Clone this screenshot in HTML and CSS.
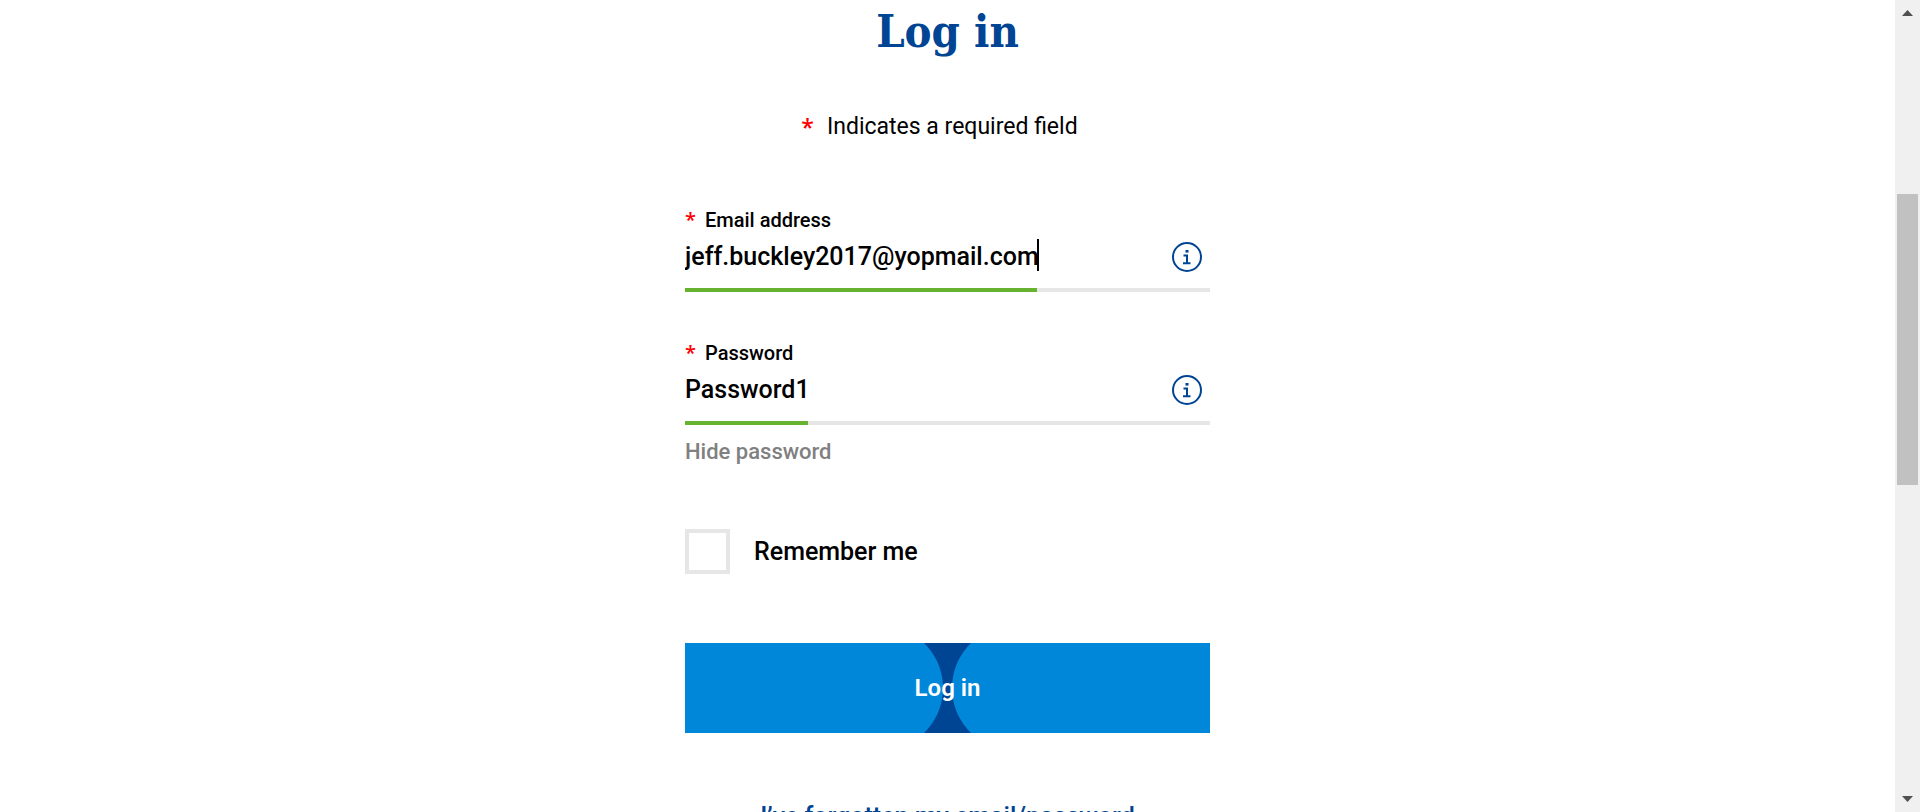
FILE: index.html
```html
<!DOCTYPE html>
<html lang="en">
<head>
<meta charset="utf-8">
<meta name="viewport" content="width=device-width, initial-scale=1">
<title>Log in</title>
<link rel="stylesheet" href="styles.css">
</head>
<body>
<div class="viewport">
  <main class="page">
    <h1 class="title">Log in</h1>
    <p class="required-note"><span class="star">*</span>Indicates a required field</p>
    <form class="form">
      <div class="field">
        <label class="label" for="email"><span class="star">*</span>Email address</label>
        <div class="control">
          <input class="input" id="email" type="text" value="jeff.buckley2017@yopmail.com">
          <button class="info" type="button" aria-label="About the email address">
            <svg viewBox="0 0 30 30" width="30" height="30" aria-hidden="true"><circle cx="15" cy="15" r="14"/><path d="M11.500 13.500H15V21.300M11 21.300H18.500"/><rect x="13.500" y="8" width="3" height="2.600"/></svg>
          </button>
          <span class="caret" style="left: 67%"></span>
        </div>
        <div class="line"><span class="line-fill" style="width: 67%"></span></div>
      </div>
      <div class="field">
        <label class="label" for="password"><span class="star">*</span>Password</label>
        <div class="control">
          <input class="input" id="password" type="text" value="Password1">
          <button class="info" type="button" aria-label="About the password">
            <svg viewBox="0 0 30 30" width="30" height="30" aria-hidden="true"><circle cx="15" cy="15" r="14"/><path d="M11.500 13.500H15V21.300M11 21.300H18.500"/><rect x="13.500" y="8" width="3" height="2.600"/></svg>
          </button>
        </div>
        <div class="line"><span class="line-fill" style="width: 23.4%"></span></div>
      </div>
      <button class="toggle" type="button">Hide password</button>
      <div class="remember">
        <input class="checkbox" id="remember" type="checkbox">
        <label class="remember-label" for="remember">Remember me</label>
      </div>
      <button class="submit" type="submit">Log in</button>
    </form>
    <a class="forgot" href="#">I’ve forgotten my email/password</a>
  </main>
  <div class="scrollbar" aria-hidden="true">
    <svg class="arrow" viewBox="0 0 25 25"><path d="M7 16 12.500 10 18 16z"/></svg>
    <div class="track"><div class="thumb" style="top: 22.200%; height: 38.200%"></div></div>
    <svg class="arrow" viewBox="0 0 25 25"><path d="M7 9 12.500 15 18 9z"/></svg>
  </div>
</div>
</body>
</html>
```
FILE: styles.css
```css
* {
  box-sizing: border-box;
}

body {
  margin: 0;
  background: #fff;
  color: #000;
  font: 25px/32px Roboto, "Liberation Sans", sans-serif;
}

.viewport {
  display: flex;
  height: 100vh;
  overflow: hidden;
}

.page {
  flex: 1;
  display: flex;
  flex-direction: column;
  align-items: center;
}

.title {
  margin: 0;
  color: #004494;
  font: bold 45px/64px "DejaVu Serif Condensed", "DejaVu Serif", serif;
  font-stretch: condensed;
}

.required-note {
  display: flex;
  gap: 13px;
  margin: 47px 0 0;
  padding-right: 16px;
  font-size: 23px;
}

.star {
  color: #f00;
  font-family: "Open Sans", sans-serif;
  font-weight: 600;
}

.form {
  display: flex;
  flex-direction: column;
  width: 100%;
  max-width: 525px;
  margin-top: 64px;
}

.field {
  margin-bottom: 48px;
}

.label {
  display: flex;
  gap: 9px;
  font-size: 20px;
  font-weight: 500;
  line-height: 26px;
}

.control {
  position: relative;
  display: flex;
  align-items: center;
  height: 48px;
  margin-bottom: 7px;
  padding-right: 8px;
}

.input {
  flex: 1;
  min-width: 0;
  padding: 0;
  border: 0;
  outline: 0;
  background: none;
  color: inherit;
  font: inherit;
  font-weight: 500;
}

.info {
  display: flex;
  padding: 0;
  border: 0;
  background: none;
}

.info svg {
  fill: none;
  stroke: #004494;
  stroke-width: 2;
}

.info rect {
  fill: #004494;
  stroke: none;
}

.caret {
  position: absolute;
  top: 6px;
  width: 2px;
  height: 32px;
  background: #000;
}

.line {
  height: 4px;
  background: #e6e6e6;
}

.line-fill {
  display: block;
  height: 4px;
  background: #67b22e;
}

.toggle {
  align-self: flex-start;
  margin-top: -37px;
  padding: 0;
  border: 0;
  background: none;
  color: #808080;
  font: 500 22px/32px Roboto, "Liberation Sans", sans-serif;
}

.remember {
  display: flex;
  align-items: center;
  gap: 24px;
  margin-top: 61px;
  font-weight: 500;
}

.checkbox {
  appearance: none;
  width: 45px;
  height: 45px;
  margin: 0;
  border: 4px solid #e6e6e6;
}

.submit {
  height: 90px;
  margin-top: 69px;
  padding: 0;
  border: 0;
  background:
    radial-gradient(circle at calc(50% - 67px) 50%, #0087da 62px, transparent 63px),
    radial-gradient(circle at calc(50% + 67px) 50%, #0087da 62px, transparent 63px),
    linear-gradient(90deg, #0087da calc(50% - 67px), #004494 0, #004494 calc(50% + 67px), #0087da 0);
  color: #fff;
  font: inherit;
  font-size: 24px;
  font-weight: 600;
}

.forgot {
  margin-top: 68px;
  color: #004494;
  font-weight: 500;
  text-decoration: none;
}

.scrollbar {
  display: flex;
  flex-direction: column;
  width: 25px;
  background: #f0f0f0;
}

.arrow {
  width: 25px;
  height: 25px;
  fill: #505050;
}

.track {
  position: relative;
  flex: 1;
}

.thumb {
  position: absolute;
  right: 2px;
  left: 2px;
  background: #c1c1c1;
}
```
